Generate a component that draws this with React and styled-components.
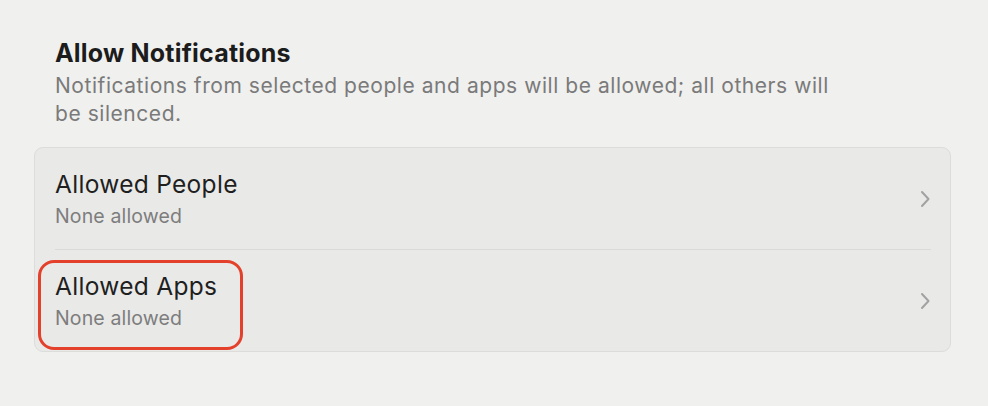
import styled, { createGlobalStyle } from "styled-components";

const GlobalStyle = createGlobalStyle`
    html, body {
        margin: 0;
        padding: 0;
        background: #f0f0ef;
        font-family: Inter, "Noto Sans", "Liberation Sans", sans-serif;
        -webkit-font-smoothing: antialiased;
    }
`;

const rows = [
    { title: "Allowed People", sub: "None allowed" },
    { title: "Allowed Apps", sub: "None allowed", marked: true },
];

export default function App() {
    return (
        <Page>
            <GlobalStyle />
            <Header>
                <Title>Allow Notifications</Title>
                <Description>
                    Notifications from selected people and apps will be allowed; all others will be silenced.
                </Description>
            </Header>
            <Card>
                {rows.map((row, i) => (
                    <div key={row.title}>
                        {i > 0 && <Divider />}
                        <Row>
                            <TextBlock>
                                <RowTitle>{row.title}</RowTitle>
                                <RowSub>{row.sub}</RowSub>
                            </TextBlock>
                            <Chevron viewBox="0 0 10 18">
                                <path d="M2 2 L8.5 9 L2 16" />
                            </Chevron>
                            {row.marked && <Highlight />}
                        </Row>
                    </div>
                ))}
            </Card>
        </Page>
    );
}

const Page = styled.div`
    width: 988px;
    height: 406px;
    box-sizing: border-box;
    padding: 38px 37px 0 34px;
`;

const Header = styled.div`
    padding-left: 21px;
    margin-bottom: 19px;
`;

const Title = styled.div`
    font-size: 25px;
    font-weight: 700;
    color: #1c1c1c;
    line-height: 30px;
    letter-spacing: 0.2px;
`;

const Description = styled.div`
    max-width: 790px;
    font-size: 21px;
    line-height: 28px;
    color: #7a7a7a;
    margin-top: 4px;
    letter-spacing: 0.55px;
`;

const Card = styled.div`
    background: #e9e9e8;
    border: 1px solid #dcdcdb;
    border-radius: 9px;
`;

const Divider = styled.div`
    height: 1px;
    margin: 0 19px 0 20px;
    background: #dadad9;
`;

const Row = styled.div`
    position: relative;
    display: flex;
    align-items: center;
    justify-content: space-between;
    height: 101px;
    padding: 0 20px;
`;

const TextBlock = styled.div`
    display: flex;
    flex-direction: column;
    gap: 5px;
`;

const RowTitle = styled.div`
    font-size: 24.5px;
    line-height: 30px;
    color: #1f1f1f;
    letter-spacing: 0.3px;
`;

const RowSub = styled.div`
    font-size: 19.5px;
    line-height: 24px;
    color: #7d7d7d;
    letter-spacing: 0.15px;
`;

const Chevron = styled.svg`
    width: 10px;
    height: 18px;
    fill: none;
    stroke: #a2a2a2;
    stroke-width: 2;
    stroke-linecap: round;
    stroke-linejoin: round;
`;

const Highlight = styled.div`
    position: absolute;
    left: 3px;
    top: 10px;
    width: 205px;
    height: 90px;
    box-sizing: border-box;
    border: 3.5px solid #e4412c;
    border-radius: 16px;
    pointer-events: none;
`;
